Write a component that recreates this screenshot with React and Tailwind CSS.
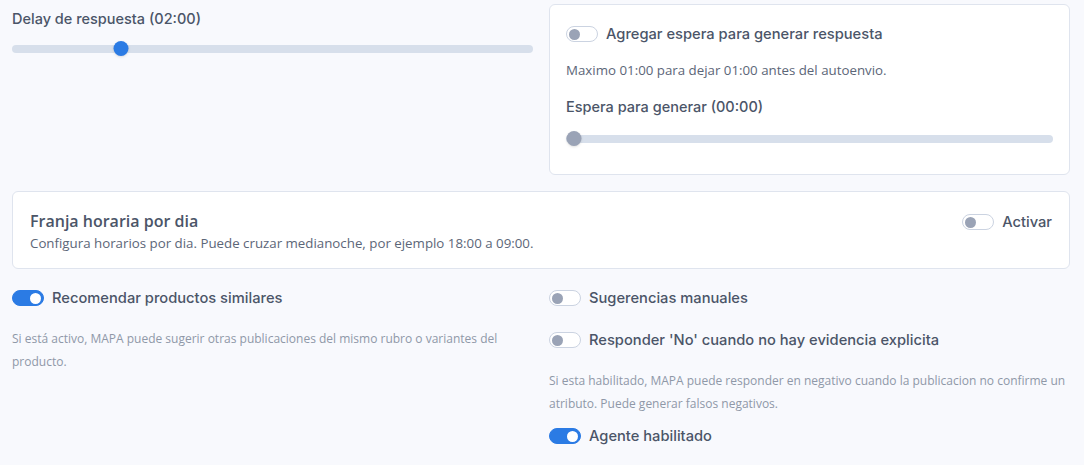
const Toggle = ({ on }) => (
  <span
    className={`inline-flex h-[16px] w-[32px] shrink-0 items-center rounded-full border px-[2px] ${
      on ? 'border-[#2b7be4] bg-[#2b7be4] justify-end' : 'border-[#cbd3e1] bg-white justify-start'
    }`}
  >
    <span className={`h-[11px] w-[11px] rounded-full ${on ? 'bg-white' : 'bg-[#9aa3b6]'}`}></span>
  </span>
);

const Slider = ({ pct, active }) => (
  <div className="relative h-[15px] w-full">
    <div className="absolute left-0 right-0 top-[4px] h-[8px] rounded-full bg-[#d7dfeb]"></div>
    <div
      className={`absolute top-0 h-[15px] w-[15px] -translate-x-1/2 rounded-full shadow-sm ${
        active ? 'bg-[#2b7be4]' : 'bg-[#9aa3b6]'
      }`}
      style={{ left: `calc(${pct}% + ${7.5 - (15 * pct) / 100}px)` }}
    ></div>
  </div>
);

const ToggleRow = ({ on, label }) => (
  <div className="flex items-center gap-[8px]">
    <Toggle on={on} />
    <span className="text-[14.7px] leading-[22px] font-medium text-[#4b5568] font-['Inter',sans-serif]">{label}</span>
  </div>
);

export default function App() {
  return (
    <div className="min-h-[465px] w-full bg-[#f8f9fd] px-[12px] pt-[4px] font-['Open_Sans',sans-serif]">
      <div className="w-[1058px]">
        <div className="grid grid-cols-2 gap-[16px]">
          {/* Delay */}
          <div className="pt-[4px]">
            <p className="text-[14.5px] leading-[22px] font-medium text-[#4b5568] font-['Inter',sans-serif]">Delay de respuesta (02:00)</p>
            <div className="mt-[11px]">
              <Slider pct={20} active />
            </div>
          </div>

          {/* Espera card */}
          <div className="h-[171px] rounded-[6px] border border-[#dfe4ee] bg-white px-[16px] pt-[18px]">
            <ToggleRow on={false} label="Agregar espera para generar respuesta" />
            <p className="mt-[15px] text-[13.3px] leading-[20px] text-[#5c6678]">Maximo 01:00 para dejar 01:00 antes del autoenvio.</p>
            <p className="mt-[16px] text-[14.5px] leading-[22px] font-medium text-[#4b5568] font-['Inter',sans-serif]">Espera para generar (00:00)</p>
            <div className="mt-[13px]">
              <Slider pct={0} active={false} />
            </div>
          </div>
        </div>

        {/* Franja */}
        <div className="mt-[16px] flex h-[78px] items-start justify-between rounded-[6px] border border-[#dfe4ee] bg-white px-[17px] pt-[19px]">
          <div>
            <p className="text-[16px] font-semibold leading-[20px] text-[#4b5568]">Franja horaria por dia</p>
            <p className="mt-[2px] text-[13.3px] leading-[20px] text-[#5c6678]">Configura horarios por dia. Puede cruzar medianoche, por ejemplo 18:00 a 09:00.</p>
          </div>
          <div>
            <ToggleRow on={false} label="Activar" />
          </div>
        </div>

        {/* Bottom */}
        <div className="mt-[18px] grid grid-cols-2 gap-[16px]">
          <div>
            <ToggleRow on label="Recomendar productos similares" />
            <p className="mt-[18px] pr-[10px] text-[12px] leading-[23px] text-[#8f98a8]">
              Si está activo, MAPA puede sugerir otras publicaciones del mismo rubro o variantes del producto.
            </p>
          </div>
          <div>
            <ToggleRow on={false} label="Sugerencias manuales" />
            <div className="mt-[20px]">
              <ToggleRow on={false} label="Responder 'No' cuando no hay evidencia explicita" />
            </div>
            <p className="mt-[18px] text-[12px] leading-[23px] text-[#8f98a8]">
              Si esta habilitado, MAPA puede responder en negativo cuando la publicacion no confirme un atributo. Puede generar falsos negativos.
            </p>
            <div className="mt-[10px]">
              <ToggleRow on label="Agente habilitado" />
            </div>
          </div>
        </div>
      </div>
    </div>
  );
}
